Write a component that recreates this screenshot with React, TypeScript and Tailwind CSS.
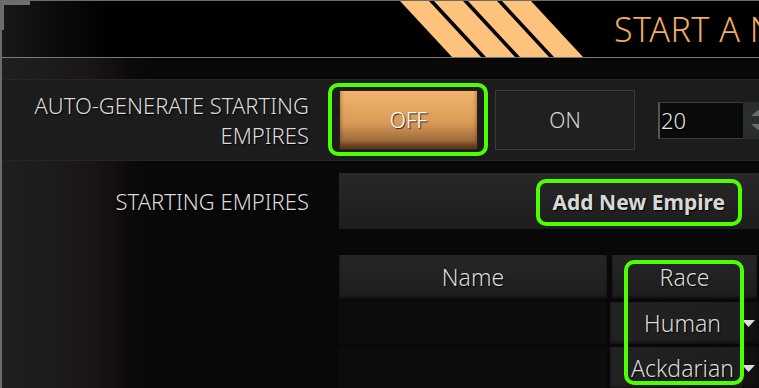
import type { ReactNode } from 'react';

// lime annotation ring laid over a control
function Ring({ className }: { className: string }) {
  return (
    <div
      className={`pointer-events-none absolute rounded-[10px] border-4 border-[#4dff00] ${className}`}
    />
  );
}

function Stripes() {
  const tops = [2, 36, 70, 104];
  return (
    <svg width="186" height="56" viewBox="0 0 186 56" className="shrink-0">
      {tops.map((x) => (
        <polygon
          key={x}
          points={`${x},0 ${x + 29},0 ${x + 81},56 ${x + 52},56`}
          fill="#fdc27c"
        />
      ))}
    </svg>
  );
}

function Caret() {
  return (
    <svg width="13" height="7" viewBox="0 0 13 7">
      <polygon points="0,0 13,0 6.5,7" fill="#dcdcdc" />
    </svg>
  );
}

function HeadCell({ children, className }: { children?: ReactNode; className: string }) {
  return (
    <div
      className={`flex items-center justify-center bg-[linear-gradient(to_bottom,#262626,#1d1d1d)] shadow-[inset_0_-2px_3px_rgba(0,0,0,0.5)] ${className}`}
    >
      {children}
    </div>
  );
}

function RaceRow({ race }: { race: string }) {
  return (
    <div className="mt-[3px] flex h-[42px]">
      <div className="w-[268px] bg-[#0c0c0c]" />
      <div className="relative ml-[3px] flex flex-1 items-center justify-center bg-[linear-gradient(to_right,#222_0%,#1e1e1e_88%,#111_89%,#111_100%)] pr-[4px] shadow-[inset_0_-2px_3px_rgba(0,0,0,0.5)]">
        {race}
        <div className="absolute right-[4px] top-[18px] flex">
          <Caret />
        </div>
      </div>
    </div>
  );
}

export default function App() {
  return (
    <div className="relative h-[388px] w-[759px] overflow-hidden border-l-2 border-t border-[#6b6b6b] bg-[linear-gradient(to_right,#1f1f1f_0px,#1c1b1a_55px,#181413_95px,#0d0b0a_125px,#080808_150px,#080808_100%)] font-['Noto_Sans',sans-serif] font-light text-[#dcdcdc] [font-stretch:87.5%] [text-shadow:1px_1px_1px_#000]">
      {/* corner bracket */}
      <div className="absolute -left-[2px] -top-[1px] h-[5px] w-[30px] bg-[#6e6e6e]" />
      <div className="absolute -left-[2px] -top-[1px] h-[30px] w-[4px] bg-[#6e6e6e]" />

      {/* Title bar */}
      <div className="flex h-[57px] items-center border-b border-[#777] bg-[linear-gradient(to_right,#181818,#0a0a0a_60px,#000_110px)]">
        <div className="ml-[396px] flex h-[56px] items-start">
          <Stripes />
        </div>
        <div className="ml-[30px] whitespace-nowrap text-[34px] leading-none tracking-[0.5px] text-[#f2aa64] [text-shadow:none]">
          START A NEW GAME
        </div>
      </div>

      <div className="h-[21px]" />

      {/* Auto-generate row */}
      <div className="flex h-[82px] items-center border-y border-[#262626] bg-[#1c1c1c]">
        <div className="w-[337px] shrink-0 pr-[30px] text-right text-[22px] leading-[30px]">
          AUTO-GENERATE STARTING
          <br />
          EMPIRES
        </div>
        <div className="relative shrink-0">
          <button className="flex h-[60px] w-[139px] items-center justify-center border border-[#2a2118] bg-[linear-gradient(to_bottom,#f2b46c,#d99a57_55%,#84562e)] pt-[2px] text-[21px] text-white shadow-[inset_0_-5px_4px_rgba(60,35,15,0.6)] [text-shadow:1px_1px_1px_#222]">
            OFF
          </button>
          <Ring className="-bottom-[6px] -left-[11px] -right-[10px] -top-[7px]" />
        </div>
        <button className="ml-[17px] flex h-[60px] w-[140px] shrink-0 items-center justify-center border border-[#3a3a3a] bg-[#202020] pt-[2px] text-[21px] text-[#d6d6d6]">
          ON
        </button>
        <div className="ml-[23px] flex h-[37px] w-[114px] shrink-0">
          <div className="flex w-[85px] items-center border-y border-l-2 border-[#3d3d3d] border-l-[#555] bg-[#0a0a0a] pl-[1px] text-[22px] text-[#e4e4e4]">
            20
          </div>
          <div className="flex flex-1 flex-col items-center justify-center gap-[8px] bg-[#2b2e2e]">
            <svg width="14" height="6" viewBox="0 0 14 6">
              <polygon points="0,6 14,6 7,0" fill="#6a6a6a" />
            </svg>
            <svg width="14" height="6" viewBox="0 0 14 6">
              <polygon points="0,0 14,0 7,6" fill="#6a6a6a" />
            </svg>
          </div>
        </div>
      </div>

      {/* Starting empires row */}
      <div className="flex items-center pt-[12px]">
        <div className="w-[337px] pr-[30px] text-right text-[22px]">STARTING EMPIRES</div>
        <div className="flex h-[56px] flex-1 items-start justify-end bg-[linear-gradient(to_bottom,#282828,#1d1d1d)] pr-[17px] pt-[6px]">
          <div className="flex h-[47px] items-center rounded-[10px] border-4 border-[#4dff00] px-[13px] text-[21px] font-bold text-[#d8d8d8] [text-shadow:1px_1px_1px_#000]">
            Add New Empire
          </div>
        </div>
      </div>

      {/* Empire table */}
      <div className="relative ml-[337px] mt-[26px] text-[23px]">
        <div className="flex h-[44px]">
          <HeadCell className="w-[268px]">Name</HeadCell>
          <HeadCell className="ml-[5px] w-[145px]">Race</HeadCell>
          <HeadCell className="ml-[2px] flex-1" />
        </div>
        <RaceRow race="Human" />
        <RaceRow race="Ackdarian" />
        <Ring className="left-[285px] top-[5px] h-[125px] w-[120px]" />
      </div>
    </div>
  );
}
